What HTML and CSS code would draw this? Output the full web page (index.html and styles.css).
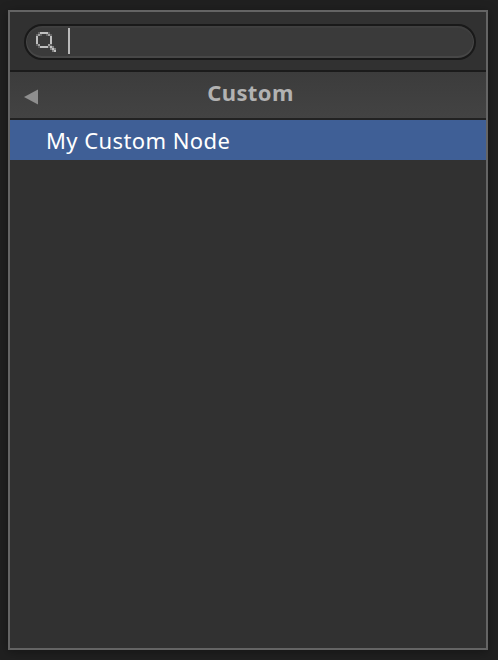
FILE: index.html
```html
<!DOCTYPE html>
<html lang="en">
<head>
<meta charset="utf-8">
<title>Create Node</title>
<link rel="stylesheet" href="styles.css">
</head>
<body>
<main class="panel">
  <div class="search-bar">
    <div class="search">
      <svg class="glass" width="20" height="20" viewBox="0 0 10 10" shape-rendering="crispEdges">
        <path fill="#c0c0c0" d="M2 0h4v1H2zM0 2h1v4H0zM7 2h1v4H7zM2 7h4v1H2zM7 7h1v1H7zM8 8h1v1H8zM9 9h1v1H9z"/>
        <path fill="#a0a0a0" d="M1 1h1v1H1zM6 1h1v1H6zM1 6h1v1H1zM6 6h1v1H6z"/>
        <path fill="#636363" d="M1 0h1v1H1zM6 0h1v1H6zM0 1h1v1H0zM7 1h1v1H7zM2 1h1v1H2zM5 1h1v1H5zM0 6h1v1H0zM7 6h1v1H7zM1 7h1v1H1zM6 7h1v1H6z"/>
        <path fill="#828282" d="M8 7h1v1H8zM7 8h1v1H7zM9 8h1v1H9zM8 9h1v1H8z"/>
      </svg>
      <span class="caret"></span>
    </div>
  </div>
  <header class="header">
    <svg class="back" width="14" height="16" viewBox="0 0 14 16"><path fill="#8e8e8e" d="M0 8L14 0.5V15.5z"/></svg>
    <h1 class="title">Custom</h1>
  </header>
  <div class="item"><span class="label">My Custom Node</span></div>
</main>
</body>
</html>
```
FILE: styles.css
```css
* { box-sizing: border-box; }

body {
  margin: 0;
  height: 660px;
  padding: 10px 10px 10px 8px;
  background: #202020;
  font-family: "Noto Sans", "Open Sans", sans-serif;
  overflow: hidden;
}

.panel {
  height: 640px;
  border: 2px solid #646464;
  background: #313131;
  box-shadow: 0 2px 10px rgba(0, 0, 0, 0.35);
}

.search-bar {
  height: 58px;
  padding: 12px 10px 0 14px;
}

.search {
  display: flex;
  align-items: flex-start;
  height: 36px;
  padding: 6px 0 0 10px;
  border: 2px solid #191919;
  border-radius: 18px;
  background: #3a3a3a;
  box-shadow: inset 0 -1px 0 1px #474747, inset 0 2px 1px #404040;
}

.glass { flex: none; }

.caret {
  width: 2px;
  height: 26px;
  margin: -4px 0 0 12px;
  background: #bababa;
}

.header {
  display: flex;
  height: 50px;
  padding-left: 14px;
  border-top: 2px solid #1b1b1b;
  border-bottom: 2px solid #222;
  background: linear-gradient(#3c3c3c, #434343);
}

.back {
  flex: none;
  margin-top: 17px;
}

.title {
  flex: 1;
  margin: 4px 23px 0 0;
  color: #b2b2b2;
  font-size: 22px;
  font-weight: 700;
  line-height: 32px;
  letter-spacing: 0.4px;
  text-align: center;
}

.item {
  height: 40px;
  padding-left: 36px;
  background: #3f5f96;
  color: #fff;
  font-size: 22px;
  line-height: 40px;
  letter-spacing: 0.42px;
  white-space: nowrap;
}
```
